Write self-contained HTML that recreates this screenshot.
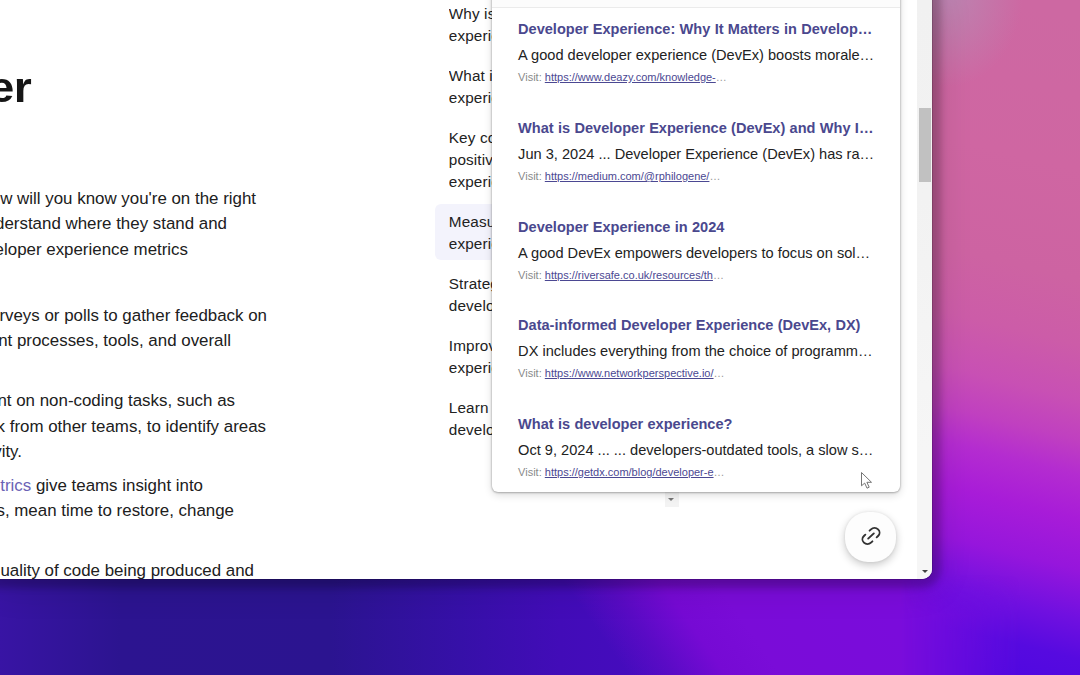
<!DOCTYPE html>
<html lang="en">
<head>
<meta charset="utf-8">
<title>Developer experience</title>
<style>
*{box-sizing:border-box;margin:0;padding:0}
html,body{width:1080px;height:675px;overflow:hidden}
body{position:relative;font-family:"Liberation Sans",Arial,sans-serif;background:#6a10d0;}
#bg{position:absolute;left:0;top:0;width:1080px;height:675px;
 background:
  radial-gradient(ellipse 75px 95px at 948px -8px, rgba(186,134,178,.95) 0%, rgba(190,128,174,.6) 50%, rgba(200,110,170,0) 100%),
  linear-gradient(194deg,#cd68a2 19px,#cf66a2 165px,#cd63a2 272px,#cc5ca8 335px,#c850b4 388px,#c040c0 427px,#b42cd0 461px,#a81cd8 504px,#9616dc 553px,#7010e0 601px,#560ae0 640px,#5008e0 674px);
}
#bg2{position:absolute;left:0;top:560px;width:1080px;height:115px;
 -webkit-mask-image:linear-gradient(90deg,#000 0,#000 900px,transparent 1020px);
 mask-image:linear-gradient(90deg,#000 0,#000 900px,transparent 1020px);}
#bg2 div{position:absolute;left:0;top:0;width:1080px;height:115px;
 background:
  linear-gradient(55deg,rgba(104,10,196,0) 515px,rgba(110,10,204,.5) 552px,#760ad4 595px,#7a0cd8 640px,#7a0cdc 800px,#720ade 905px),
  linear-gradient(90deg,#3814a4 0px,#2c1490 120px,#2b1490 330px,#3610a8 460px,#420cb8 560px,#480cc2 700px,#480cc2 1080px);
 -webkit-mask-image:linear-gradient(90deg,#000 0,#000 900px,transparent 960px),linear-gradient(180deg,transparent 0,transparent 15px,#000 55px);
 mask-image:linear-gradient(90deg,#000 0,#000 900px,transparent 960px),linear-gradient(180deg,transparent 0,transparent 15px,#000 55px);}
#winsh{position:absolute;left:0;top:0;width:932px;height:579px;border-bottom-right-radius:10px;box-shadow:0 0 0 1px rgba(0,0,0,.15),0 0 7px 9px rgba(0,0,0,.2),0 2px 36px 6px rgba(0,0,0,.12)}
#win{position:absolute;left:0;top:0;width:932px;height:579.2px;background:#fff;border-bottom-right-radius:10px;overflow:hidden;}
.h1{position:absolute;right:900.6px;top:59.5px;font-weight:700;font-size:42.5px;line-height:56px;color:#161616;white-space:nowrap;letter-spacing:-.5px;transform:scaleX(1.09);transform-origin:100% 50%}
.bl{position:absolute;right:0;white-space:nowrap;font-size:16.9px;line-height:26px;color:#202020;}
.bl a{color:#6b63b5;text-decoration:none}
.toc{position:absolute;left:448.8px;white-space:nowrap;font-size:15.3px;letter-spacing:.12px;line-height:22px;color:#222;width:60px;overflow:hidden}
#hl{position:absolute;left:435px;top:204px;width:70px;height:56px;background:#f3f3fc;border-radius:6px 0 0 6px}
#panel{position:absolute;left:491.6px;top:-40px;width:408.6px;height:532px;background:#fff;border-radius:6px;box-shadow:0 0 2.5px rgba(0,0,0,.3),0 1px 2px rgba(0,0,0,.15),0 3px 9px rgba(0,0,0,.14);overflow:hidden}
#panel .hr{position:absolute;left:0;top:0;width:100%;height:48px;background:#fcfcfc;border-bottom:1px solid #ebebeb}
.it{position:absolute;left:26.5px;width:380px}
.it .t{font-weight:700;font-size:14.55px;word-spacing:.3px;line-height:20px;color:#4a488e;white-space:nowrap}
.it .d{font-size:14.6px;line-height:20px;color:#222;white-space:nowrap;margin-top:6px}
.it .v{font-size:11px;line-height:14px;color:#8a8a8a;white-space:nowrap;margin-top:5px}
.it .v a{color:#4b4892;text-decoration:underline}
.it .v i{font-style:normal;color:#999}
#sb{position:absolute;left:917.4px;top:0;width:14.6px;height:580px;background:linear-gradient(180deg,#f1f1f1 0,#f2f2f2 200px,#f6f6f6 450px,#f6f6f6 100%)}
#sb .th{position:absolute;left:1.6px;top:107.5px;width:12.2px;height:74px;background:#c1c1c1}
#sb .dn{position:absolute;left:4.3px;top:570px;width:0;height:0;border-left:3.3px solid transparent;border-right:3.3px solid transparent;border-top:3.3px solid #404040}
#fab{position:absolute;left:845px;top:512px;width:51px;height:49.6px;border-radius:23px;background:#fdfdfd;box-shadow:0 3px 9px rgba(0,0,0,.22),0 0 3px rgba(0,0,0,.08)}
#fab svg{position:absolute;left:13.7px;top:12.4px;transform:scaleY(.94)}
#cbox{position:absolute;left:664.5px;top:492px;width:14px;height:15px;background:#f3f3f3}
#caret{position:absolute;left:668px;top:497.5px;width:0;height:0;border-left:3.5px solid transparent;border-right:3.5px solid transparent;border-top:3.5px solid #777}
#cur{position:absolute;left:860px;top:471.3px}
</style>
</head>
<body>
<div id="bg"></div>
<div id="bg2"><div></div></div>
<div id="winsh"></div>
<div id="win">
  <div class="h1">developer</div>

  <div class="bl" style="right:676px;top:186px">How will you know you're on the right</div>
  <div class="bl" style="right:705px;top:211.3px">understand where they stand and</div>
  <div class="bl" style="right:744px;top:236.6px">developer experience metrics</div>
  <div class="bl" style="right:665px;top:303px">surveys or polls to gather feedback on</div>
  <div class="bl" style="right:701px;top:328px">current processes, tools, and overall</div>
  <div class="bl" style="right:697px;top:388px">spent on non-coding tasks, such as</div>
  <div class="bl" style="right:666px;top:414px">feedback from other teams, to identify areas</div>
  <div class="bl" style="right:910px;top:439px">productivity.</div>
  <div class="bl" style="right:729px;top:473px"><a>DORA metrics</a> give teams insight into</div>
  <div class="bl" style="right:698px;top:498px">deployments, mean time to restore, change</div>
  <div class="bl" style="right:678px;top:558px">the quality of code being produced and</div>

  <div id="hl"></div>
  <div class="toc" style="top:3px">Why is developer<br>experience important</div>
  <div class="toc" style="top:65px">What is a good developer<br>experience</div>
  <div class="toc" style="top:127px">Key components of a<br>positive developer<br>experience</div>
  <div class="toc" style="top:211px">Measuring developer<br>experience</div>
  <div class="toc" style="top:273px">Strategies to improve<br>developer experience</div>
  <div class="toc" style="top:335px">Improving developer<br>experience</div>
  <div class="toc" style="top:397px">Learn more about<br>developer experience</div>

  <div id="cbox"></div>
  <div id="caret"></div>
  <div id="panel">
    <div class="hr"></div>
    <div class="it" style="top:59px"><div class="t"><span>Developer Experience: Why It Matters in Develop…</span></div><div class="d"><span>A good developer experience (DevEx) boosts morale…</span></div><div class="v">Visit: <a>https://www.deazy.com/knowledge-</a><i>…</i></div></div>
    <div class="it" style="top:158px"><div class="t"><span>What is Developer Experience (DevEx) and Why I…</span></div><div class="d"><span>Jun 3, 2024 ... Developer Experience (DevEx) has ra…</span></div><div class="v">Visit: <a>https://medium.com/@rphilogene/</a><i>…</i></div></div>
    <div class="it" style="top:257px"><div class="t"><span>Developer Experience in 2024</span></div><div class="d"><span>A good DevEx empowers developers to focus on sol…</span></div><div class="v">Visit: <a>https://riversafe.co.uk/resources/th</a><i>…</i></div></div>
    <div class="it" style="top:355px"><div class="t"><span>Data-informed Developer Experience (DevEx, DX)</span></div><div class="d"><span>DX includes everything from the choice of programm…</span></div><div class="v">Visit: <a>https://www.networkperspective.io/</a><i>…</i></div></div>
    <div class="it" style="top:454px"><div class="t"><span>What is developer experience?</span></div><div class="d"><span>Oct 9, 2024 ... ... developers-outdated tools, a slow s…</span></div><div class="v">Visit: <a>https://getdx.com/blog/developer-e</a><i>…</i></div></div>
  </div>
  <div id="fab"><svg width="24" height="24" viewBox="0 0 24 24" fill="none" stroke="#333" stroke-width="1.9" stroke-linecap="round" stroke-linejoin="round"><g transform="rotate(-45 12 12)"><path d="M9 17H7A5 5 0 0 1 7 7h2"/><path d="M15 7h2a5 5 0 1 1 0 10h-2"/><line x1="8" x2="16" y1="12" y2="12"/></g></svg></div>
  <svg id="cur" width="14" height="20" viewBox="0 0 14 20"><path d="M1.5 1.5 L1.5 14.8 L4.7 12.1 L7 17.2 L9.2 16.2 L6.9 11.3 L11.5 11.3 Z" fill="#fff" stroke="#666" stroke-width=".9" stroke-linejoin="round"/></svg>
  <div id="sb"><div class="th"></div><div class="dn"></div></div>
</div>
</body>
</html>
